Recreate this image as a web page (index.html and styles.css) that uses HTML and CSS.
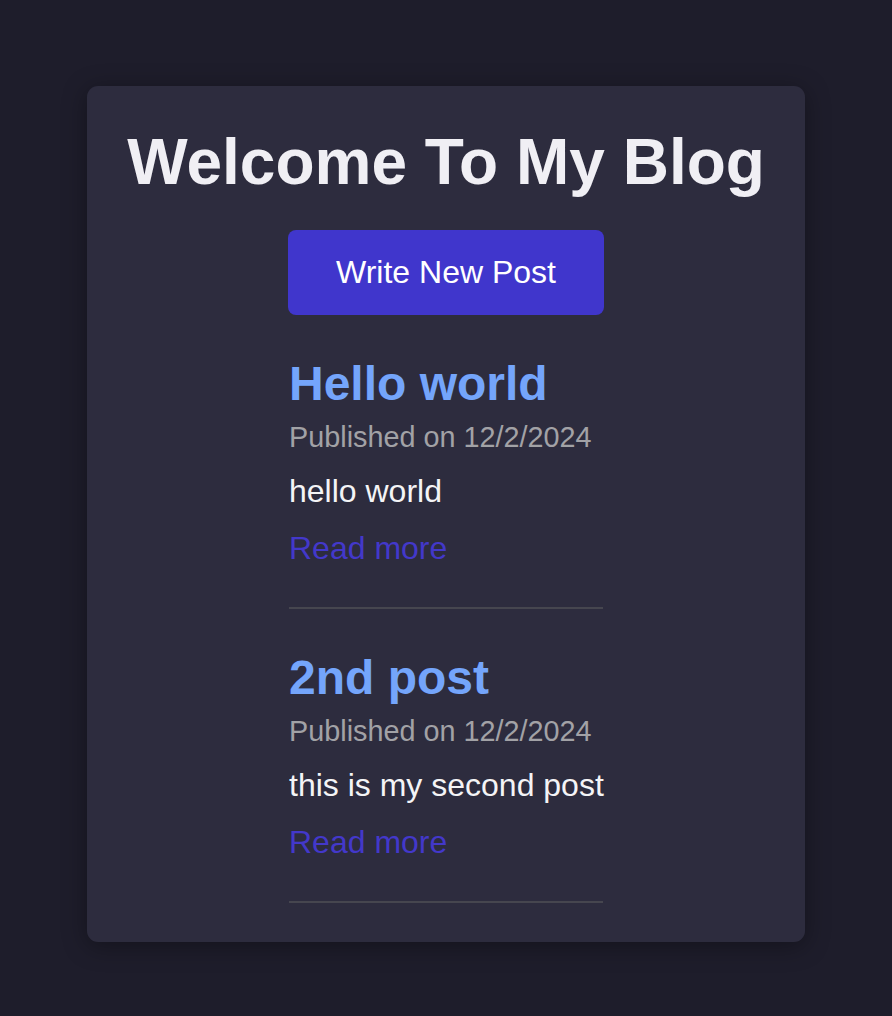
FILE: index.html
```html
<!DOCTYPE html>
<html lang="en">
<head>
<meta charset="utf-8">
<title>My Blog</title>
<link rel="stylesheet" href="styles.css">
</head>
<body>
  <main class="card">
    <h1 class="title">Welcome To My Blog</h1>
    <div class="column">
      <a class="btn" href="#">Write New Post</a>
      <div class="posts">
        <article class="post">
          <h2 class="post-title">Hello world</h2>
          <div class="post-meta">Published on 12/2/2024</div>
          <p class="post-body">hello world</p>
          <a class="read-more" href="#">Read more</a>
        </article>
        <article class="post">
          <h2 class="post-title">2nd post</h2>
          <div class="post-meta">Published on 12/2/2024</div>
          <p class="post-body">this is my second post</p>
          <a class="read-more" href="#">Read more</a>
        </article>
      </div>
    </div>
  </main>
</body>
</html>
```
FILE: styles.css
```css
html, body {
  margin: 0;
  padding: 0;
}
body {
  background: #1e1d2b;
  font-family: "Liberation Sans", Arial, sans-serif;
  padding: 86px 0 74px;
}
.card {
  width: 718px;
  margin: 0 auto;
  box-sizing: border-box;
  background: #2d2c3e;
  border-radius: 11px;
  box-shadow: 0 4px 24px rgba(0, 0, 0, 0.35);
  padding: 39px 0 39px;
  display: flex;
  flex-direction: column;
  align-items: center;
}
.title {
  margin: 0 0 31px;
  font-size: 64px;
  font-weight: 700;
  color: #f0eff4;
  text-align: center;
}
.column {
  width: 316px;
  display: flex;
  flex-direction: column;
}
.btn {
  display: block;
  background: #4036cc;
  color: #ffffff;
  text-decoration: none;
  font-size: 32px;
  text-align: center;
  padding: 24px 0;
  border-radius: 8px;
  margin-bottom: 41px;
}
.posts {
  display: flex;
  flex-direction: column;
  gap: 41px;
  padding: 0 1px;
}
.post {
  display: flex;
  flex-direction: column;
  align-items: flex-start;
  padding-bottom: 40px;
  border-bottom: 2px solid #46464f;
  white-space: nowrap;
}
.post-title {
  margin: 0 0 10px;
  font-size: 48px;
  font-weight: 700;
  color: #74a5fb;
}
.post-meta {
  font-size: 28.8px;
  color: #a2a2a6;
  margin-bottom: 19px;
}
.post-body {
  margin: 0 0 20px;
  font-size: 32px;
  color: #f4f4f6;
}
.read-more {
  font-size: 32px;
  color: #4338ca;
  text-decoration: none;
}
```
